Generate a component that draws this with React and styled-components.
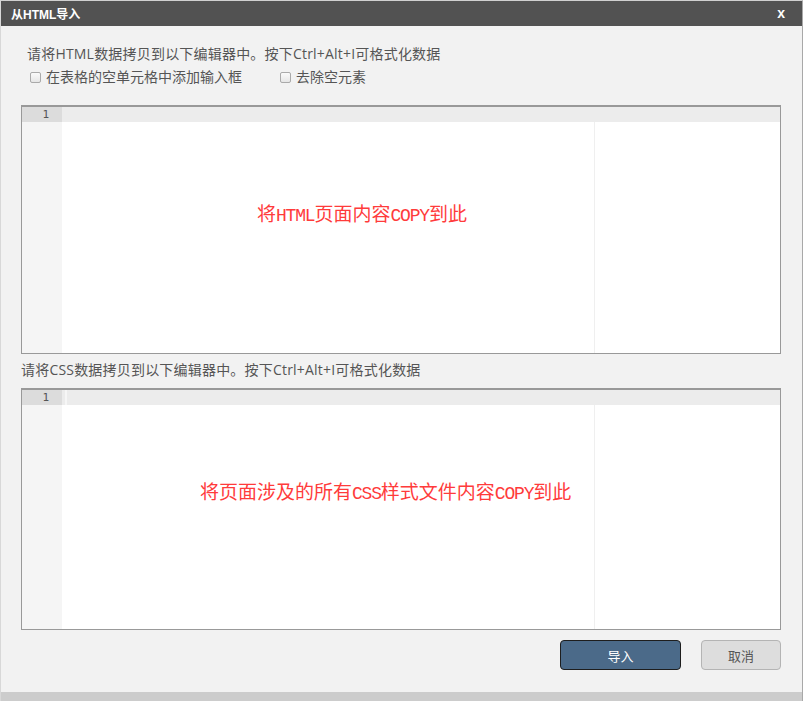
import React from "react";
import styled, { createGlobalStyle } from "styled-components";

const GlobalStyle = createGlobalStyle`
  html, body {
    margin: 0;
    padding: 0;
    background: #f2f2f2;
  }
  * {
    box-sizing: border-box;
  }
`;

const UI_FONT = `"Open Sans", "Noto Sans CJK SC", sans-serif`;

const Dialog = styled.div`
  width: 803px;
  height: 701px;
  display: flex;
  flex-direction: column;
  background: #f2f2f2;
  border-top: 1px solid #d0d0d0;
  border-left: 1px solid #d8d8d8;
  border-right: 1px solid #a8a8a8;
  font-family: ${UI_FONT};
`;

const Header = styled.div`
  height: 25px;
  flex: none;
  display: flex;
  align-items: center;
  justify-content: space-between;
  padding: 0 17px 0 10px;
  background: #525252;
  color: #fff;
  font-family: "Liberation Sans", "Noto Sans CJK SC", sans-serif;
  font-size: 12px;
  font-weight: bold;
`;

const Close = styled.span`
  font-size: 14px;
  font-weight: bold;
  line-height: 1;
  margin-top: -2px;
`;

const Body = styled.div`
  flex: 1;
  display: flex;
  flex-direction: column;
  padding: 19px 21px 0 20px;
`;

const Hint = styled.div`
  font-size: 14px;
  line-height: 18px;
  letter-spacing: 0.2px;
  color: #555;
  padding-left: ${(p) => p.$indent || 0}px;
  margin-bottom: ${(p) => p.$after || 0}px;
`;

const Options = styled.div`
  display: flex;
  gap: 38px;
  padding-left: 9px;
  margin-top: 5px;
  margin-bottom: 19px;
`;

const Option = styled.label`
  display: flex;
  align-items: center;
  gap: 5px;
  font-size: 14px;
  line-height: 18px;
  color: #555;
`;

const Box = styled.span`
  width: 11px;
  height: 11px;
  border: 1px solid #aaa;
  border-radius: 2px;
  background: linear-gradient(#fafafa, #e6e6e6);
`;

const Editor = styled.div`
  height: ${(p) => p.$height}px;
  flex: none;
  display: grid;
  grid-template-columns: 40px 1fr;
  background: #fff;
  border: 1px solid #999;
  border-top-width: 2px;
  margin-bottom: ${(p) => p.$after || 0}px;
`;

const Gutter = styled.div`
  background: #f5f5f5;
`;

const LineNo = styled.div`
  height: 15px;
  background: #dcdcdc;
  color: #555;
  font-family: "DejaVu Sans Mono", monospace;
  font-size: 11px;
  line-height: 15px;
  text-align: right;
  padding-right: 13px;
`;

const Content = styled.div`
  position: relative;
`;

const ActiveLine = styled.div`
  height: 15px;
  background: #ececec;
  position: relative;
  z-index: 1;
`;

const Cursor = styled.span`
  position: absolute;
  left: 3px;
  top: 0;
  width: 2px;
  height: 15px;
  background: #f6f6f6;
`;

const PrintMargin = styled.div`
  position: absolute;
  left: 532px;
  top: 0;
  bottom: 0;
  width: 1px;
  background: #efefef;
`;

const Placeholder = styled.div`
  position: absolute;
  left: ${(p) => p.$left}px;
  top: ${(p) => p.$top}px;
  color: #ff3b3b;
  font-family: "Noto Sans CJK SC", serif;
  font-size: 19px;
  line-height: 22px;
  white-space: nowrap;
  z-index: 2;
`;

// half-width latin, like a Song typeface
const Latin = styled.span`
  font-family: "Liberation Mono", monospace;
  font-size: 18px;
  letter-spacing: -1.2px;
`;

const Actions = styled.div`
  display: flex;
  justify-content: flex-end;
  gap: 20px;
  margin-top: 10px;
`;

const Button = styled.button`
  height: 30px;
  width: ${(p) => p.$width}px;
  border-radius: 4px;
  font-family: ${UI_FONT};
  font-size: 13px;
  border: 1px solid ${(p) => (p.$primary ? "#1e1e1e" : "#b4b4b4")};
  background: ${(p) => (p.$primary ? "#4b6a89" : "#dddddd")};
  color: ${(p) => (p.$primary ? "#fff" : "#555")};
  padding: 0;
`;

const Footer = styled.div`
  height: 9px;
  flex: none;
  background: #cccccc;
`;

function CodeBox({ height, after, parts, left, top, cursor }) {
  return (
    <Editor $height={height} $after={after}>
      <Gutter>
        <LineNo>1</LineNo>
      </Gutter>
      <Content>
        <ActiveLine>{cursor && <Cursor />}</ActiveLine>
        <PrintMargin />
        <Placeholder $left={left} $top={top}>
          {parts.map((t, i) =>
            /^[A-Z]+$/.test(t) ? <Latin key={i}>{t}</Latin> : <span key={i}>{t}</span>
          )}
        </Placeholder>
      </Content>
    </Editor>
  );
}

export default function App() {
  return (
    <>
      <GlobalStyle />
      <Dialog>
        <Header>
          <span>从HTML导入</span>
          <Close>x</Close>
        </Header>
        <Body>
          <Hint $indent={6}>请将HTML数据拷贝到以下编辑器中。按下Ctrl+Alt+I可格式化数据</Hint>
          <Options>
            <Option>
              <Box />
              在表格的空单元格中添加输入框
            </Option>
            <Option>
              <Box />
              去除空元素
            </Option>
          </Options>
          <CodeBox
            height={249}
            after={7}
            parts={["将", "HTML", "页面内容", "COPY", "到此"]}
            left={195}
            top={95}
          />
          <Hint $after={9}>请将CSS数据拷贝到以下编辑器中。按下Ctrl+Alt+I可格式化数据</Hint>
          <CodeBox
            height={242}
            parts={["将页面涉及的所有", "CSS", "样式文件内容", "COPY", "到此"]}
            left={138}
            top={90}
            cursor
          />
          <Actions>
            <Button $primary $width={121}>导入</Button>
            <Button $width={80}>取消</Button>
          </Actions>
        </Body>
        <Footer />
      </Dialog>
    </>
  );
}
